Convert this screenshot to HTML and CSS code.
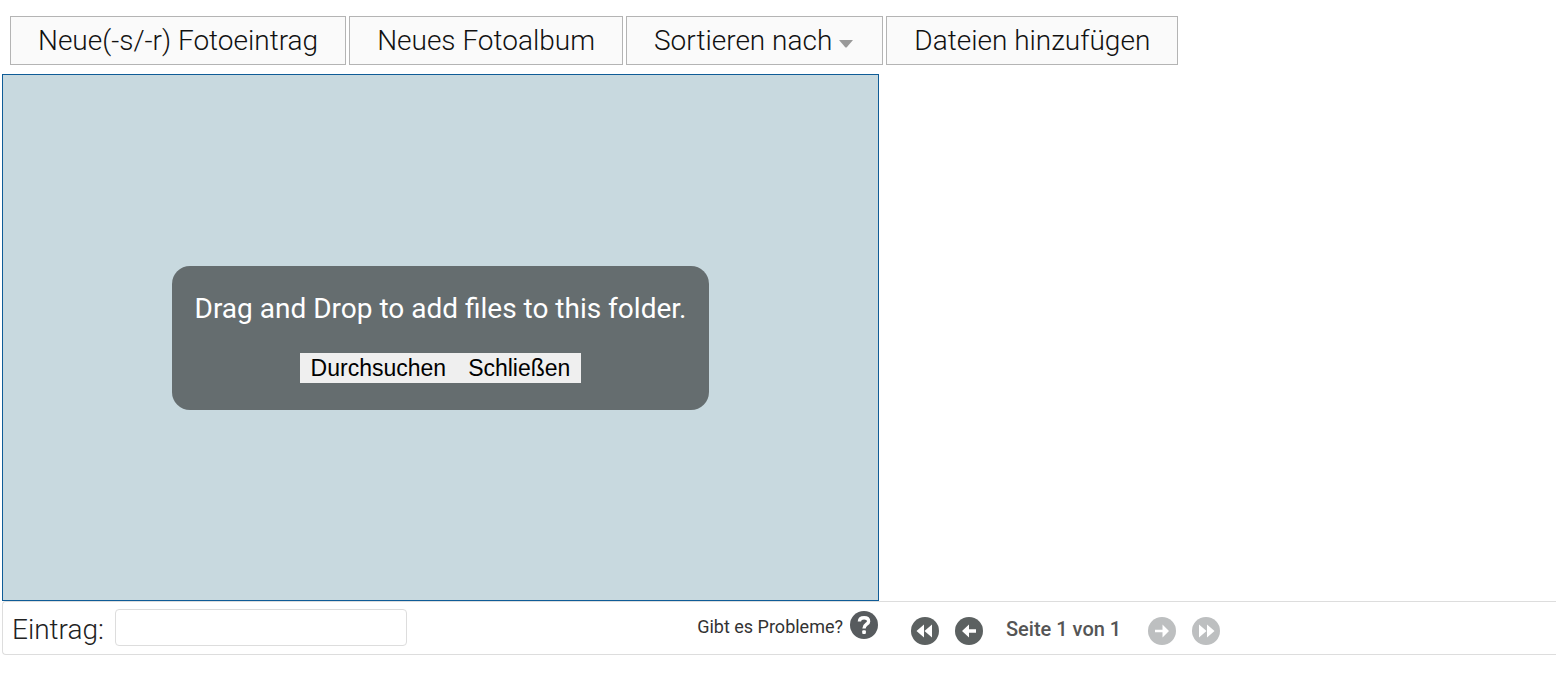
FILE: index.html
```html
<!DOCTYPE html>
<html lang="de">
<head>
<meta charset="utf-8">
<title>Fotoalbum</title>
<link rel="stylesheet" href="styles.css">
</head>
<body>
<nav class="toolbar">
  <button class="tool" type="button">Neue(-s/-r) Fotoeintrag</button>
  <button class="tool" type="button">Neues Fotoalbum</button>
  <button class="tool" type="button">Sortieren nach<svg class="caret" width="14" height="8" viewBox="0 0 14 8"><path d="M0 0H14L8 7Q7 8 6 7Z" fill="#999"/></svg></button>
  <button class="tool" type="button">Dateien hinzufügen</button>
</nav>
<main class="dropzone">
  <section class="dialog">
    <p class="message">Drag and Drop to add files to this folder.</p>
    <div class="actions">
      <button class="action" type="button">Durchsuchen</button>
      <button class="action" type="button">Schließen</button>
    </div>
  </section>
</main>
<footer class="statusbar">
  <div class="search">
    <label class="search-label" for="entry">Eintrag:</label>
    <input class="search-input" id="entry" type="text">
    <a class="help" href="#"><span class="help-text">Gibt es Probleme?</span>
      <svg class="help-icon" width="28" height="28" viewBox="0 0 28 28"><circle cx="14" cy="14" r="14" fill="#575b5e"/><path d="M9.4 10.5C9.6 7.7 11.4 6.8 14.1 6.8C16.9 6.8 18.6 8.2 18.6 10.4C18.6 13.4 14 13.2 14 17.4" fill="none" stroke="#fff" stroke-width="3.4"/><rect x="12.2" y="19.2" width="3.7" height="3.7" rx="1" fill="#fff"/></svg>
    </a>
  </div>
  <div class="pager">
    <button class="page-button" type="button" aria-label="Erste Seite"><svg width="28" height="28" viewBox="0 0 28 28"><circle cx="14" cy="14" r="14" fill="#5c6161"/><path d="M13 7.5V20.5L5.5 14ZM21 7.5V20.5L13.5 14Z" fill="#fff"/></svg></button>
    <button class="page-button" type="button" aria-label="Vorherige Seite"><svg width="28" height="28" viewBox="0 0 28 28"><circle cx="14" cy="14" r="14" fill="#5c6161"/><path d="M7 14L14 7.5V12.3H21V15.7H14V20.5Z" fill="#fff"/></svg></button>
    <span class="page-label">Seite 1 von 1</span>
    <button class="page-button" type="button" aria-label="Nächste Seite" disabled><svg width="28" height="28" viewBox="0 0 28 28"><circle cx="14" cy="14" r="14" fill="#bdbfc0"/><path d="M21 14L14.5 7.5V12.7H7V15.3H14.5V20.5Z" fill="#fff"/></svg></button>
    <button class="page-button" type="button" aria-label="Letzte Seite" disabled><svg width="28" height="28" viewBox="0 0 28 28"><circle cx="14" cy="14" r="14" fill="#bdbfc0"/><path d="M7 7.5V20.5L14.5 14ZM15 7.5V20.5L22.5 14Z" fill="#fff"/></svg></button>
  </div>
</footer>
</body>
</html>
```
FILE: styles.css
```css
* { box-sizing: border-box; }
body {
  margin: 0;
  background: #fff;
  color: #333;
  font-family: Roboto, "Liberation Sans", sans-serif;
}
button { font: inherit; cursor: pointer; }
svg { display: block; }
.toolbar {
  display: flex;
  gap: 3px;
  padding: 16px 10px 9px;
}
.tool {
  display: flex;
  align-items: center;
  padding: 8px 27px 7px;
  border: 1px solid #b4b4b4;
  background: #fafafa;
  color: #111;
  font-size: 28px;
  font-weight: 300;
  line-height: 32px;
  white-space: nowrap;
}
.caret { margin: 6px 2px 0 7px; }
.dropzone {
  display: flex;
  align-items: center;
  justify-content: center;
  width: 877px;
  max-width: 100%;
  min-height: 527px;
  margin-left: 2px;
  border: 1px solid #0f5c97;
  background: #c8d9df;
}
.dialog {
  padding: 26px 23px 27px;
  border-radius: 18px;
  background: #656d6f;
  text-align: center;
}
.message {
  margin: 0 0 28px;
  color: #fff;
  font-size: 28px;
  line-height: 33px;
}
.actions { display: flex; justify-content: center; }
.action {
  padding: 0 11px;
  border: 0;
  background: #efefef;
  color: #000;
  font-family: "Liberation Sans", sans-serif;
  font-size: 23px;
  line-height: 30px;
}
.statusbar {
  display: flex;
  align-items: center;
  gap: 32px;
  margin-left: 2px;
  min-height: 54px;
  border: 1px solid #ddd;
  border-right: 0;
  border-radius: 4px 0 0 4px;
}
.search {
  display: flex;
  align-items: center;
  width: 876px;
  padding: 0 1px 2px 9px;
}
.search-label {
  margin-right: 11px;
  padding-top: 5px;
  color: #222;
  font-size: 28px;
  font-weight: 300;
  line-height: 32px;
}
.search-input {
  width: 292px;
  height: 37px;
  padding: 0 8px;
  border: 1px solid #ddd;
  border-radius: 4px;
  font: inherit;
  font-size: 24px;
}
.help {
  display: flex;
  align-items: center;
  gap: 7px;
  margin-left: auto;
  padding-bottom: 4px;
  color: #333;
  font-size: 18px;
  text-decoration: none;
}
.help-text { padding-top: 3px; }
.pager {
  display: flex;
  align-items: center;
  gap: 16px;
  padding-top: 6px;
}
.page-button {
  padding: 0;
  border: 0;
  background: none;
}
.page-label {
  padding: 0 11px 4px 7px;
  color: #555;
  font-size: 20px;
  font-weight: 500;
}
```
